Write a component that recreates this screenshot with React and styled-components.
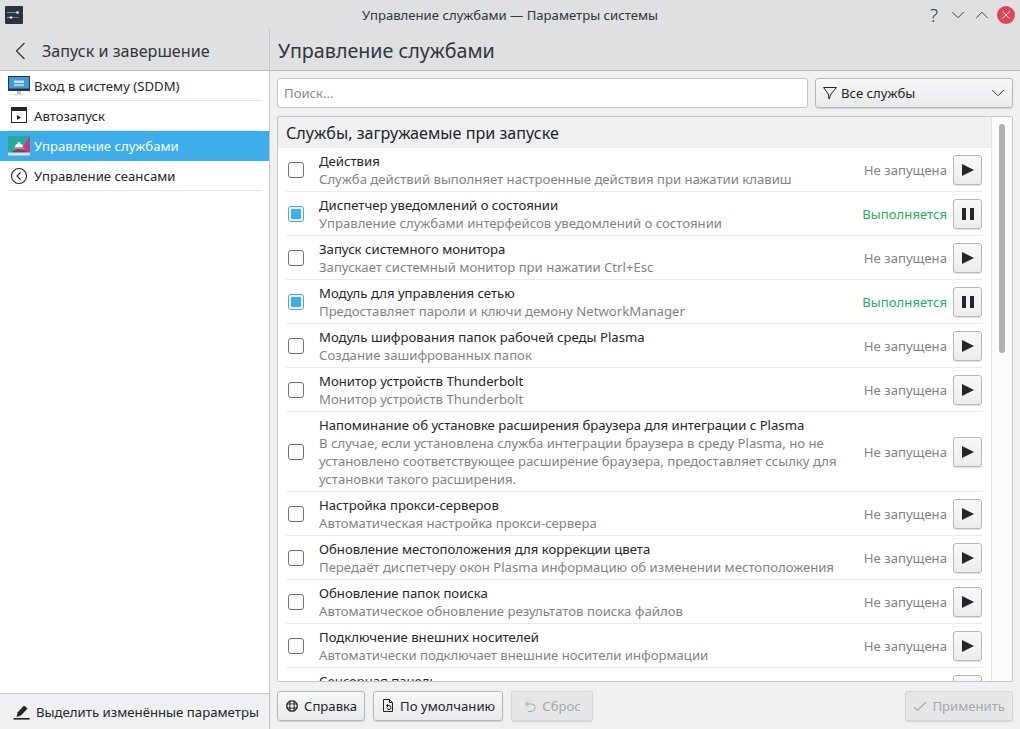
import React from 'react';
import styled, { createGlobalStyle } from 'styled-components';
import { ChevronDown, ChevronUp, X } from 'lucide-react';

const GlobalStyle = createGlobalStyle`
  html, body { margin: 0; padding: 0; height: 100%; overflow: hidden; }
  body {
    font-family: "Noto Sans", "Open Sans", sans-serif;
    font-size: 13.15px;
    color: #232629;
    background: #eff0f1;
  }
`;

const Window = styled.div`
  width: 1020px;
  height: 729px;
  display: flex;
  flex-direction: column;
  overflow: hidden;
`;

const TitleBar = styled.div`
  height: 29px;
  flex: none;
  box-sizing: border-box;
  background: #dee0e2;
  display: grid;
  grid-template-columns: 1fr auto 1fr;
  align-items: center;
  padding: 0 5px;
`;

const TitleText = styled.div`
  color: #31363b;
`;

const WinButtons = styled.div`
  display: flex;
  align-items: center;
  justify-content: flex-end;
  gap: 6px;
  color: #31363b;
`;

const WinButton = styled.div`
  width: 18px;
  height: 18px;
  display: flex;
  align-items: center;
  justify-content: center;
  font-size: 19px;
  font-weight: 300;
  border-radius: 50%;
  background: ${p => (p.$close ? '#e0445a' : 'transparent')};
  color: ${p => (p.$close ? '#fff' : '#31363b')};
  svg { flex: none; }
`;

const Body = styled.div`
  flex: 1;
  display: flex;
  min-height: 0;
`;

const Sidebar = styled.aside`
  width: 270px;
  flex: none;
  box-sizing: border-box;
  display: flex;
  flex-direction: column;
  border-right: 1px solid #c4c7c9;
  background: #fff;
`;

const SideHeader = styled.div`
  height: 42px;
  flex: none;
  box-sizing: border-box;
  background: #dee0e2;
  border-bottom: 1px solid #b8bbbe;
  display: flex;
  align-items: center;
  gap: 16px;
  padding: 2px 0 0 15px;
  font-size: 16.15px;
  color: #31363b;
`;

const SideList = styled.div`
  flex: 1;
`;

const SideRow = styled.div`
  height: 30px;
  box-sizing: border-box;
  display: flex;
  align-items: center;
  gap: 4px;
  padding-left: 8px;
  background: ${p => (p.$active ? '#3daee9' : '#fff')};
  color: ${p => (p.$active ? '#fcfcfc' : '#232629')};
  position: relative;
  &::after {
    content: '';
    display: ${p => (p.$active ? 'none' : 'block')};
    position: absolute;
    left: 8px;
    right: 7px;
    bottom: 0;
    height: 1px;
    background: #e6e7e8;
  }
`;

const SideIcon = styled.svg`
  width: 22px;
  height: 22px;
  flex: none;
`;

const SideFooter = styled.div`
  height: 36px;
  flex: none;
  box-sizing: border-box;
  background: #eff0f1;
  border-top: 1px solid #c4c7c9;
  display: flex;
  align-items: center;
  gap: 6px;
  padding-left: 13px;
  font-size: 13.2px;
`;

const Main = styled.main`
  flex: 1;
  display: flex;
  flex-direction: column;
  min-width: 0;
  background: #eff0f1;
`;

const MainHeader = styled.div`
  height: 42px;
  flex: none;
  box-sizing: border-box;
  background: #dee0e2;
  border-bottom: 1px solid #b8bbbe;
  padding-left: 8px;
  font-size: 19.7px;
  line-height: 43px;
  color: #31363b;
`;

const Toolbar = styled.div`
  display: flex;
  gap: 7px;
  padding: 7px 7px 8px 7px;
  flex: none;
`;

const SearchBox = styled.div`
  flex: 1;
  height: 30px;
  box-sizing: border-box;
  background: #fff;
  border: 1px solid #c4c7c9;
  border-radius: 3px;
  padding-left: 6px;
  line-height: 28px;
  color: #7f8c8d;
`;

const Combo = styled.div`
  width: 198px;
  height: 30px;
  box-sizing: border-box;
  border: 1px solid #b6b9bb;
  border-radius: 3px;
  background: linear-gradient(#f6f7f7, #e9eaeb);
  box-shadow: 0 1px 1px rgba(0, 0, 0, 0.12);
  display: flex;
  align-items: center;
  padding: 0 3px 0 6px;
  gap: 3px;
  span { flex: 1; }
`;

const Panel = styled.div`
  margin: 0 7px;
  height: 566px;
  flex: none;
  box-sizing: border-box;
  border: 1px solid #c4c7c9;
  border-radius: 2px;
  display: flex;
  overflow: hidden;
  background: #fff;
`;

const ListArea = styled.div`
  flex: 1;
  min-width: 0;
  overflow: hidden;
`;

const GroupHeader = styled.div`
  height: 31px;
  box-sizing: border-box;
  background: #eff0f1;
  font-size: 16.15px;
  line-height: 33px;
  padding-left: 8px;
  color: #232629;
`;

const ServiceRow = styled.div`
  height: ${p => (p.$tall ? 80 : 44)}px;
  flex: none;
  box-sizing: border-box;
  margin: 0 9px 0 8px;
  display: flex;
  align-items: center;
  border-bottom: 1px solid #e9eaeb;
`;

const CheckBox = styled.div`
  width: 16px;
  height: 16px;
  box-sizing: border-box;
  flex: none;
  border: 1px solid ${p => (p.$on ? '#3daee9' : '#6e7275')};
  border-radius: 3px;
  background: #fcfcfc;
  display: flex;
  align-items: center;
  justify-content: center;
  margin-left: 2px;
  &::after {
    content: '';
    display: ${p => (p.$on ? 'block' : 'none')};
    width: 10px;
    height: 10px;
    background: #3daee9;
  }
`;

const Texts = styled.div`
  flex: 1;
  min-width: 0;
  margin-left: 15px;
  line-height: 18px;
`;

const Name = styled.div`
  color: #232629;
`;

const Description = styled.div`
  color: #7f8385;
  min-height: 18px;
`;

const Status = styled.div`
  flex: none;
  color: ${p => (p.$running ? '#27ae60' : '#7f8385')};
  margin-right: 6px;
`;

const RunButton = styled.div`
  width: 29px;
  height: 30px;
  box-sizing: border-box;
  flex: none;
  border: 1px solid #b6b9bb;
  border-radius: 3px;
  background: linear-gradient(#f8f8f8, #ebeced);
  box-shadow: 0 1px 1px rgba(0, 0, 0, 0.12);
  display: flex;
  align-items: center;
  justify-content: center;
`;

const ScrollTrack = styled.div`
  width: 21px;
  flex: none;
  box-sizing: border-box;
  border-left: 1px solid #e4e5e6;
  background: #fcfcfc;
  padding: 7px 0 0 7px;
`;

const ScrollThumb = styled.div`
  width: 6px;
  height: 229px;
  border-radius: 3px;
  background: #b0b0b0;
`;

const Footer = styled.div`
  flex: 1;
  display: flex;
  align-items: center;
  gap: 8px;
  padding: 0 7px;
`;

const FootButton = styled.div`
  height: 30px;
  min-width: 82px;
  box-sizing: border-box;
  border: 1px solid ${p => (p.disabled ? '#d3d5d6' : '#b6b9bb')};
  border-radius: 3px;
  background: ${p => (p.disabled ? '#e6e7e8' : 'linear-gradient(#f6f7f7, #e9eaeb)')};
  box-shadow: 0 1px 1px rgba(0, 0, 0, 0.12);
  color: ${p => (p.disabled ? '#a5a8aa' : '#232629')};
  display: flex;
  align-items: center;
  justify-content: center;
  gap: 5px;
  padding: 0 7px;
  white-space: nowrap;
  svg { flex: none; }
`;

const Spacer = styled.div`
  flex: 1;
`;

const services = [
  { name: 'Действия', desc: ['Служба действий выполняет настроенные действия при нажатии клавиш'] },
  { name: 'Диспетчер уведомлений о состоянии', desc: ['Управление службами интерфейсов уведомлений о состоянии'], running: true },
  { name: 'Запуск системного монитора', desc: ['Запускает системный монитор при нажатии Ctrl+Esc'] },
  { name: 'Модуль для управления сетью', desc: ['Предоставляет пароли и ключи демону NetworkManager'], running: true },
  { name: 'Модуль шифрования папок рабочей среды Plasma', desc: ['Создание зашифрованных папок'] },
  { name: 'Монитор устройств Thunderbolt', desc: ['Монитор устройств Thunderbolt'] },
  {
    name: 'Напоминание об установке расширения браузера для интеграции с Plasma',
    desc: [
      'В случае, если установлена служба интеграции браузера в среду Plasma, но не',
      'установлено соответствующее расширение браузера, предоставляет ссылку для',
      'установки такого расширения.',
    ],
    tall: true,
  },
  { name: 'Настройка прокси-серверов', desc: ['Автоматическая настройка прокси-сервера'] },
  { name: 'Обновление местоположения для коррекции цвета', desc: ['Передаёт диспетчеру окон Plasma информацию об изменении местоположения'] },
  { name: 'Обновление папок поиска', desc: ['Автоматическое обновление результатов поиска файлов'] },
  { name: 'Подключение внешних носителей', desc: ['Автоматически подключает внешние носители информации'] },
  // last row is cut by the panel edge, only the top of its name shows
  { name: 'Сенсорная панель', desc: [''], cutOff: true },
];

const AppLogo = () => (
  <svg width="18" height="18" viewBox="0 0 18 18" style={{ display: 'block' }}>
    <rect width="18" height="18" rx="1" fill="#2c3238" />
    <path d="M2 6.5h12M2 11.5h12" stroke="#6b7278" strokeWidth="1" />
    <path d="M2 6.5h11M2 11.5h4" stroke="#3daee9" strokeWidth="1" />
    <circle cx="12.5" cy="6.5" r="1.3" fill="#eff0f1" />
    <circle cx="6" cy="11.5" r="1.3" fill="#eff0f1" />
  </svg>
);

const BackArrow = () => (
  <svg width="11" height="18" viewBox="0 0 11 18">
    <path d="M9.5 1L1.5 9l8 8" fill="none" stroke="#31363b" strokeWidth="1.2" />
  </svg>
);

const FunnelIcon = () => (
  <svg width="16" height="16" viewBox="0 0 16 16">
    <path d="M1.5 2.5h13L9 9l-2 5-.7-5z" fill="none" stroke="#232629" strokeWidth="1" strokeLinejoin="round" />
  </svg>
);

const MonitorIcon = () => (
  <SideIcon viewBox="0 0 22 22">
    <rect x="0" y="1" width="22" height="15" fill="#2f3439" />
    <rect x="1" y="2" width="20" height="11.5" fill="#3a9fd8" />
    <rect x="6" y="5.5" width="10" height="2.5" fill="#c9dfea" />
    <rect x="6" y="9" width="10" height="2" fill="#a8cfe4" />
    <rect x="9" y="16" width="4" height="3" fill="#c4c7c9" />
    <rect x="6.5" y="19" width="9" height="1.2" fill="#d5d7d8" />
  </SideIcon>
);

const AutostartIcon = () => (
  <SideIcon viewBox="0 0 22 22">
    <rect x="3.5" y="2.5" width="15" height="15" fill="#fff" stroke="#232629" />
    <rect x="3" y="2" width="16" height="4" fill="#232629" />
    <path d="M9 10l4 2.5-4 2.5z" fill="#232629" />
  </SideIcon>
);

const ServicesIcon = () => (
  <SideIcon viewBox="0 0 22 22">
    <rect x="0" y="1" width="22" height="18" fill="#2aa79c" />
    <path d="M22 1v18H10z" fill="#b8407f" />
    <path d="M0 19l11-6 11 6z" fill="#4b5a62" />
    <rect x="0" y="17.5" width="22" height="3" fill="#dfe3e5" />
    <path d="M7 12.5a4 4 0 0 1 8 0z" fill="#fff" />
    <rect x="5.5" y="12.5" width="11" height="1.6" fill="#ef6a86" />
    <rect x="10" y="7" width="2" height="1.5" fill="#fff" />
  </SideIcon>
);

const SessionIcon = () => (
  <SideIcon viewBox="0 0 22 22">
    <circle cx="11" cy="11" r="7.5" fill="none" stroke="#232629" strokeWidth="1.1" />
    <path d="M12.5 7.5L9 11l3.5 3.5" fill="none" stroke="#232629" strokeWidth="1.1" />
  </SideIcon>
);

const PlayIcon = () => (
  <svg width="14" height="14" viewBox="0 0 14 14">
    <path d="M1 1l12 6-12 6z" fill="#232629" />
  </svg>
);

const PauseIcon = () => (
  <svg width="14" height="14" viewBox="0 0 14 14">
    <rect x="1" y="1" width="4" height="12" fill="#232629" />
    <rect x="9" y="1" width="4" height="12" fill="#232629" />
  </svg>
);

const MarkerIcon = () => (
  <svg width="17" height="17" viewBox="0 0 17 17">
    <path d="M4.5 9.5L11 2.5l3.5 3-6.5 7-3.5.5z" fill="#232629" />
    <path d="M4.5 10.5l2.5 2.5-3.5 1z" fill="#232629" />
    <rect x="0.5" y="15" width="16" height="1.6" fill="#232629" />
  </svg>
);

const HelpIcon = () => (
  <svg width="14" height="14" viewBox="0 0 14 14">
    <circle cx="7" cy="7" r="5.2" fill="none" stroke="#232629" strokeWidth="1.3" />
    <path d="M5 1.5v11M9 1.5v11M1.5 5h11M1.5 9h11" stroke="#232629" strokeWidth="1.1" />
    <rect x="5.6" y="5.6" width="2.8" height="2.8" fill="#eeeff0" />
  </svg>
);

const DefaultsIcon = () => (
  <svg width="14" height="15" viewBox="0 0 14 15">
    <path d="M2.5 1.5h6l3 3v9h-9z" fill="none" stroke="#232629" strokeWidth="1" />
    <path d="M8.5 1.5v3h3" fill="none" stroke="#232629" strokeWidth="1" />
    <path d="M6 7.5h2a2 2 0 1 1-2 2" fill="none" stroke="#232629" strokeWidth="1" />
    <path d="M7 6l-1.5 1.5L7 9" fill="none" stroke="#232629" strokeWidth="1" />
  </svg>
);

const ResetIcon = () => (
  <svg width="14" height="14" viewBox="0 0 14 14">
    <path d="M3 5h5.5a3.7 3.7 0 0 1 0 7.4H5" fill="none" stroke="#a5a8aa" strokeWidth="1" />
    <path d="M5.5 2L2.5 5l3 3" fill="none" stroke="#a5a8aa" strokeWidth="1" />
  </svg>
);

const ApplyIcon = () => (
  <svg width="14" height="14" viewBox="0 0 14 14">
    <path d="M1 8l3.5 3.5L13 3" fill="none" stroke="#a5a8aa" strokeWidth="1.1" />
  </svg>
);

export default function App() {
  return (
    <Window>
      <GlobalStyle />
      <TitleBar>
        <AppLogo />
        <TitleText>Управление службами — Параметры системы</TitleText>
        <WinButtons>
          <WinButton>?</WinButton>
          <WinButton><ChevronDown size={22} strokeWidth={1} /></WinButton>
          <WinButton><ChevronUp size={22} strokeWidth={1} /></WinButton>
          <WinButton $close><X size={14} strokeWidth={1.4} /></WinButton>
        </WinButtons>
      </TitleBar>
      <Body>
        <Sidebar>
          <SideHeader>
            <BackArrow />
            <span>Запуск и завершение</span>
          </SideHeader>
          <SideList>
            <SideRow><MonitorIcon />Вход в систему (SDDM)</SideRow>
            <SideRow><AutostartIcon />Автозапуск</SideRow>
            <SideRow $active><ServicesIcon />Управление службами</SideRow>
            <SideRow><SessionIcon />Управление сеансами</SideRow>
          </SideList>
          <SideFooter>
            <MarkerIcon />
            <span>Выделить изменённые параметры</span>
          </SideFooter>
        </Sidebar>
        <Main>
          <MainHeader>Управление службами</MainHeader>
          <Toolbar>
            <SearchBox>Поиск...</SearchBox>
            <Combo>
              <FunnelIcon />
              <span>Все службы</span>
              <ChevronDown size={22} strokeWidth={1} />
            </Combo>
          </Toolbar>
          <Panel>
            <ListArea>
              <GroupHeader>Службы, загружаемые при запуске</GroupHeader>
              {services.map(s => (
                <ServiceRow key={s.name} $tall={s.tall}>
                  <CheckBox $on={s.running} />
                  <Texts>
                    <Name>{s.name}</Name>
                    {s.desc.map(line => <Description key={line}>{line}</Description>)}
                  </Texts>
                  {!s.cutOff && (
                    <Status $running={s.running}>{s.running ? 'Выполняется' : 'Не запущена'}</Status>
                  )}
                  <RunButton>{s.running ? <PauseIcon /> : <PlayIcon />}</RunButton>
                </ServiceRow>
              ))}
            </ListArea>
            <ScrollTrack><ScrollThumb /></ScrollTrack>
          </Panel>
          <Footer>
            <FootButton><HelpIcon />Справка</FootButton>
            <FootButton><DefaultsIcon />По умолчанию</FootButton>
            <FootButton disabled><ResetIcon />Сброс</FootButton>
            <Spacer />
            <FootButton disabled><ApplyIcon />Применить</FootButton>
          </Footer>
        </Main>
      </Body>
    </Window>
  );
}
